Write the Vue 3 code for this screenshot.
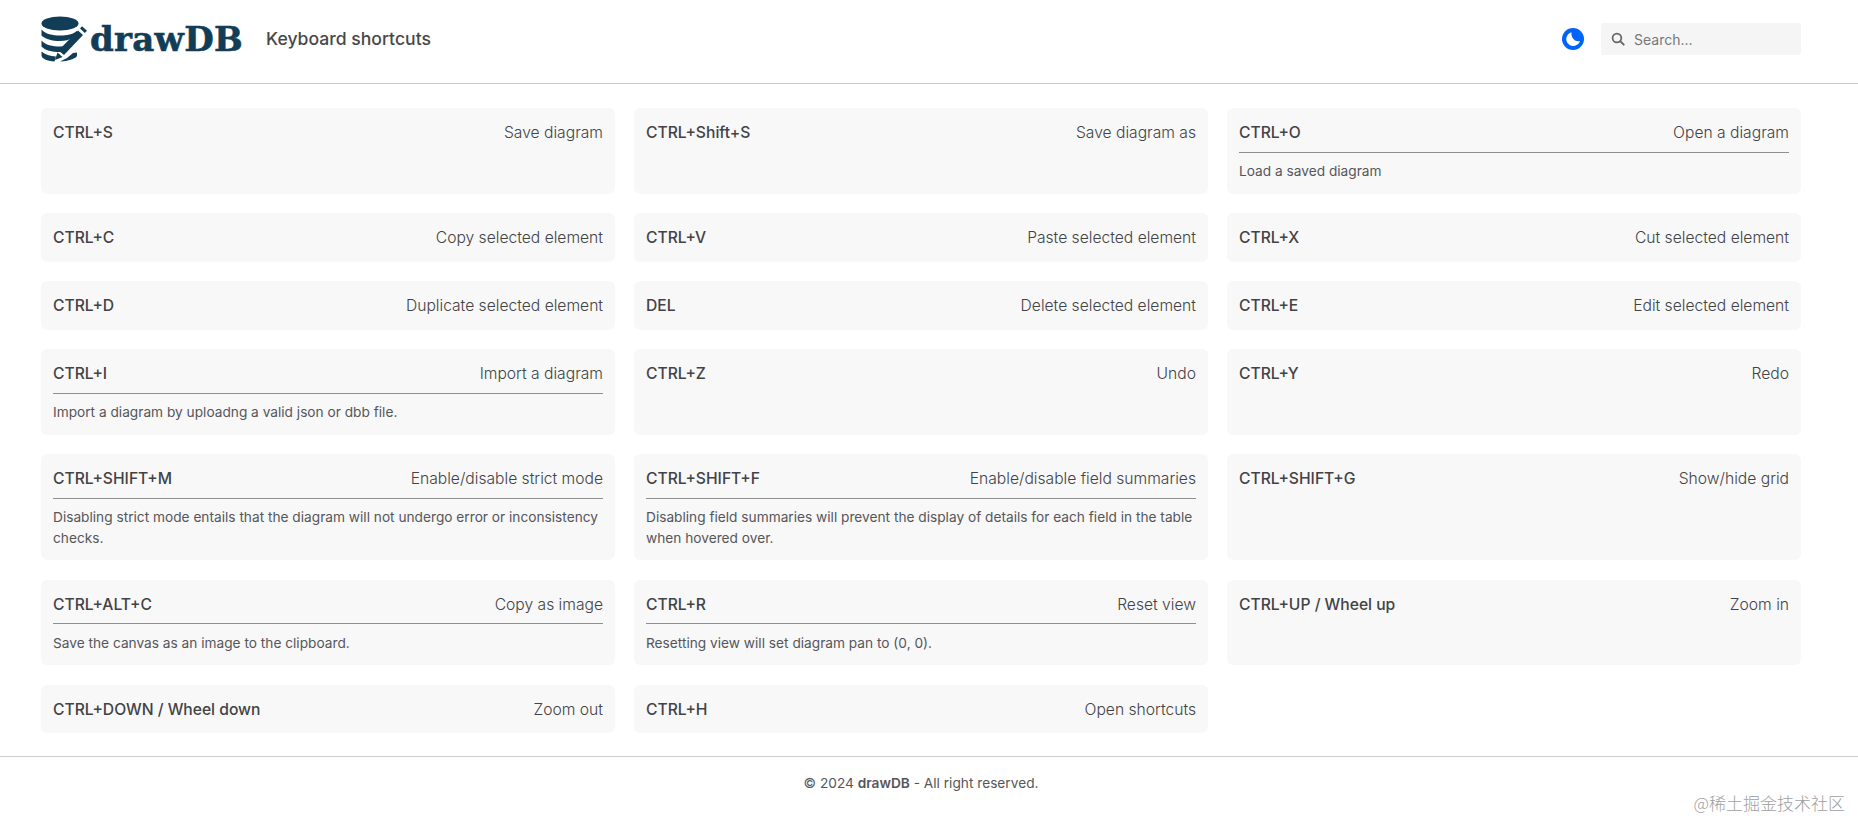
<script setup>
const shortcuts = [
  { key: 'CTRL+S', title: 'Save diagram' },
  { key: 'CTRL+Shift+S', title: 'Save diagram as' },
  { key: 'CTRL+O', title: 'Open a diagram', desc: 'Load a saved diagram' },
  { key: 'CTRL+C', title: 'Copy selected element' },
  { key: 'CTRL+V', title: 'Paste selected element' },
  { key: 'CTRL+X', title: 'Cut selected element' },
  { key: 'CTRL+D', title: 'Duplicate selected element' },
  { key: 'DEL', title: 'Delete selected element' },
  { key: 'CTRL+E', title: 'Edit selected element' },
  { key: 'CTRL+I', title: 'Import a diagram', desc: 'Import a diagram by uploadng a valid json or dbb file.' },
  { key: 'CTRL+Z', title: 'Undo' },
  { key: 'CTRL+Y', title: 'Redo' },
  { key: 'CTRL+SHIFT+M', title: 'Enable/disable strict mode', desc: 'Disabling strict mode entails that the diagram will not undergo error or inconsistency checks.' },
  { key: 'CTRL+SHIFT+F', title: 'Enable/disable field summaries', desc: 'Disabling field summaries will prevent the display of details for each field in the table when hovered over.' },
  { key: 'CTRL+SHIFT+G', title: 'Show/hide grid' },
  { key: 'CTRL+ALT+C', title: 'Copy as image', desc: 'Save the canvas as an image to the clipboard.' },
  { key: 'CTRL+R', title: 'Reset view', desc: 'Resetting view will set diagram pan to (0, 0).' },
  { key: 'CTRL+UP / Wheel up', title: 'Zoom in' },
  { key: 'CTRL+DOWN / Wheel down', title: 'Zoom out' },
  { key: 'CTRL+H', title: 'Open shortcuts' },
]
</script>

<template>
  <div class="page">
    <header class="topbar">
      <div class="brand">
        <svg class="logo-mark" viewBox="0 0 46 46" width="46" height="46" aria-hidden="true">
          <ellipse cx="19" cy="7.500" rx="18.500" ry="7" fill="#123d56" />
          <path d="M.5 13.500C4 18 12 19.500 19 19.500s13-1 16.500-4.500l1 1-4 5.500C28 24 24 25 19 25 11 25 4 23 .5 19.500Z" fill="#123d56" />
          <path d="M.5 24.500C4 29 12 30.500 19 30.500c2.500 0 4.500-.2 6.500-.5L20 36c-8 .2-16-1.500-19.500-5.500Z" fill="#123d56" />
          <path d="M.5 35.500C4 38.500 9 40 15 40.500l-1.500 5C6 45 .5 42.500.5 39.500Z" fill="#123d56" />
          <path d="M36 36.500v3c0 2.500-7 5.500-17 6l7-3.500 6-5Z" fill="#123d56" />
          <path d="M37 14.500l5 4.500-19 20-5.500-4.500Z" fill="#123d56" />
          <path d="M39 12.500l2-2.300 5 4.500-2.200 2.400Z" fill="#123d56" />
          <path d="M16.500 36.500l5 4.500-7.500 3Z" fill="#123d56" />
        </svg>
        <span class="wordmark">drawDB</span>
      </div>
      <h1 class="page-title">Keyboard shortcuts</h1>
      <div class="actions">
        <svg class="moon" viewBox="0 0 22 22" width="22" height="22" aria-hidden="true">
          <circle cx="11" cy="11" r="11" fill="#0064fa" />
          <path d="M9.600 4.200a7 7 0 1 0 8.400 8.800c-4.500 1.500-9.500-3-8.400-8.800Z" fill="#fff" />
        </svg>
        <label class="search">
          <svg viewBox="0 0 16 16" width="14" height="14" aria-hidden="true">
            <circle cx="6.800" cy="6.800" r="5" fill="none" stroke="#666" stroke-width="2" />
            <path d="M10.500 10.500L14.500 14.500" stroke="#666" stroke-width="2.200" stroke-linecap="round" />
          </svg>
          <input type="text" placeholder="Search..." />
        </label>
      </div>
    </header>

    <main class="grid">
      <section v-for="item in shortcuts" :key="item.key" class="card">
        <div class="card-head" :class="{ ruled: item.desc }">
          <span class="keys">{{ item.key }}</span>
          <span class="title">{{ item.title }}</span>
        </div>
        <p v-if="item.desc" class="desc">{{ item.desc }}</p>
      </section>
    </main>

    <footer class="footer">
      © 2024 <strong>drawDB</strong> - All right reserved.
    </footer>

    <div class="watermark">@稀土掘金技术社区</div>
  </div>
</template>

<style scoped>
.page {
  position: relative;
  width: 1858px;
  height: 819px;
  overflow: hidden;
  background: #fff;
  color: #424346;
  font-family: Inter, "Noto Sans", sans-serif;
}

.topbar {
  display: flex;
  align-items: center;
  height: 83px;
  padding: 0 57px 0 41px;
  border-bottom: 1px solid #c9c9c9;
  box-sizing: content-box;
}

.brand {
  display: flex;
  align-items: center;
  gap: 3px;
  width: 225px;
  margin-bottom: 6px;
}

.logo-mark {
  flex: none;
}

.wordmark {
  font-family: "DejaVu Serif", serif;
  font-weight: 700;
  font-size: 34px;
  line-height: 46px;
  color: #123d56;
  -webkit-text-stroke: 0.6px #123d56;
  letter-spacing: 0.3px;
}

.page-title {
  margin: 0 0 7px;
  font-size: 17.6px;
  font-weight: 500;
  color: #47484a;
}

.actions {
  display: flex;
  align-items: center;
  gap: 17px;
  margin-left: auto;
  margin-bottom: 5px;
}

.moon {
  display: block;
}

.search {
  display: flex;
  align-items: center;
  gap: 9px;
  width: 200px;
  height: 32px;
  padding-left: 10px;
  box-sizing: border-box;
  border-radius: 3px;
  background: #f5f5f5;
}

.search input {
  width: 150px;
  border: 0;
  outline: 0;
  padding: 0;
  background: transparent;
  font: 400 14px Inter, sans-serif;
  color: #424346;
}

.search input::placeholder {
  color: #77787a;
  opacity: 1;
}

.grid {
  display: grid;
  grid-template-columns: repeat(3, 574px);
  column-gap: 19px;
  row-gap: 19.5px;
  padding: 24px 41px 23px 41px;
}

.card {
  box-sizing: border-box;
  padding: 13px 12px 12px;
  border-radius: 6px;
  background: #f8f8f8;
}

.card-head {
  display: flex;
  justify-content: space-between;
  font-size: 15.65px;
  line-height: 23.5px;
}

.card-head.ruled {
  padding-bottom: 7px;
  border-bottom: 1px solid #8f8f8f;
}

.keys {
  font-weight: 500;
}

.title {
  font-weight: 300;
}

.desc {
  margin: 8.5px 0 0;
  font-size: 13.7px;
  line-height: 20.5px;
  font-weight: 400;
  color: #55565a;
}

.footer {
  padding: 16px 16px 0 0;
  border-top: 1px solid #cfcfcf;
  text-align: center;
  font-size: 13.7px;
  line-height: 20px;
  color: #55565a;
}

.footer strong {
  font-weight: 600;
}

.watermark {
  position: absolute;
  right: 13px;
  bottom: 4px;
  font-family: "Noto Sans CJK SC", sans-serif;
  font-weight: 300;
  font-size: 17px;
  line-height: 24px;
  color: #a0a0a0;
}
</style>
